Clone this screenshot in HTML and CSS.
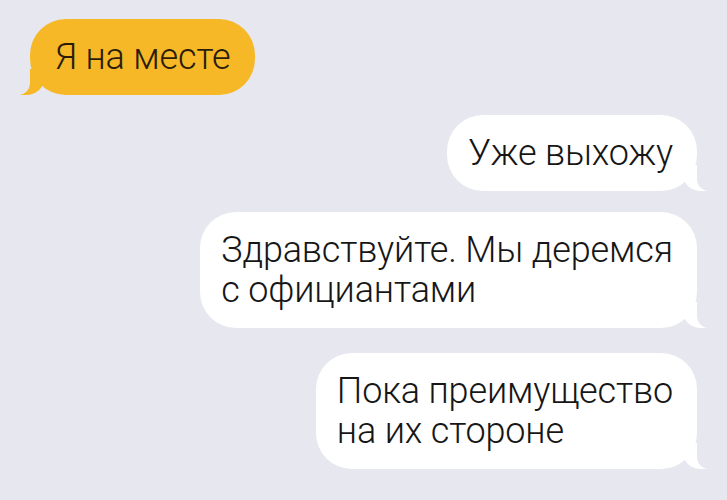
FILE: index.html
```html
<!DOCTYPE html>
<html lang="ru">
  <head>
    <meta charset="UTF-8" />
    <meta name="viewport" content="width=device-width, initial-scale=1.0" />
    <title>Чат</title>
    <link rel="stylesheet" href="styles.css">
  </head>
  <body>
    <main class="chat">
      <!-- Incoming message -->
      <div class="bubble incoming first">Я на месте</div>

      <!-- Outgoing messages -->
      <div class="bubble outgoing second">Уже выхожу</div>
      <div class="bubble outgoing third">Здравствуйте. Мы деремся<br>с официантами</div>
      <div class="bubble outgoing fourth">Пока преимущество<br>на их стороне</div>
    </main>
  </body>
</html>
```

FILE: styles.css
```css
/* General Styling */
* {
  margin: 0;
  padding: 0;
  box-sizing: border-box;
}

body {
  background-color: #e7e7ef;
  font-family: Roboto, "Noto Sans", sans-serif;
  font-weight: 300;
  width: 727px;
  height: 500px;
  overflow: hidden;
}

.chat {
  display: flex;
  flex-direction: column;
  padding: 19px 30px 0 30px;
}

.bubble {
  position: relative;
  font-size: 36px;
  line-height: 40px;
  letter-spacing: -0.15px;
  padding: 18px 24px 18px 21px;
  border-radius: 36px;
  color: #161616;
  background-color: #fff;
}

.incoming {
  align-self: flex-start;
  padding-left: 25px;
  padding-right: 25px;
  background-color: #f6b826;
  color: #2b1c0c;
}

.outgoing {
  align-self: flex-end;
}

.second {
  margin-top: 20px;
}

.third {
  margin-top: 21px;
}

.fourth {
  margin-top: 25px;
}

/* Bubble tails */
.bubble::before,
.bubble::after {
  content: "";
  position: absolute;
  bottom: 0;
  height: 26px;
}

.incoming::before {
  left: -10px;
  width: 24px;
  background-color: #f6b826;
  border-bottom-right-radius: 18px 16px;
}

.incoming::after {
  left: -22px;
  width: 22px;
  background-color: #e7e7ef;
  border-bottom-right-radius: 12px;
}

.outgoing::before {
  right: -12px;
  width: 26px;
  background-color: #fff;
  border-bottom-left-radius: 18px 16px;
}

.outgoing::after {
  right: -24px;
  width: 24px;
  background-color: #e7e7ef;
  border-bottom-left-radius: 12px;
}
```
